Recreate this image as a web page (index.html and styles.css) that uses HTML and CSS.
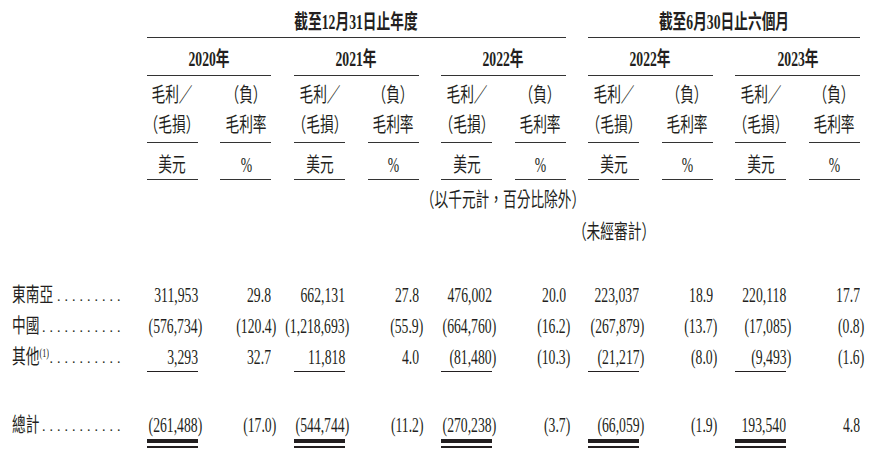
FILE: index.html
```html
<!DOCTYPE html>
<html lang="zh-Hant">
<head>
<meta charset="utf-8">
<title>毛利表</title>
<link rel="stylesheet" href="styles.css">
</head>
<body>
<div class="fin">
  <div class="b"></div>
  <div class="t span6"><span class="x">截至12月31日止年度</span></div>
  <div class="t span4"><span class="x">截至6月30日止六個月</span></div>

  <div class="b"></div>
  <div class="y"><span class="x">2020年</span></div>
  <div class="y"><span class="x">2021年</span></div>
  <div class="y"><span class="x">2022年</span></div>
  <div class="y"><span class="x">2022年</span></div>
  <div class="y"><span class="x">2023年</span></div>

  <div class="b"></div>
  <div class="s"><span class="x">毛利／</span><span class="x">（毛損）</span></div>
  <div class="s"><span class="x">（負）</span><span class="x">毛利率</span></div>
  <div class="s"><span class="x">毛利／</span><span class="x">（毛損）</span></div>
  <div class="s"><span class="x">（負）</span><span class="x">毛利率</span></div>
  <div class="s"><span class="x">毛利／</span><span class="x">（毛損）</span></div>
  <div class="s"><span class="x">（負）</span><span class="x">毛利率</span></div>
  <div class="s"><span class="x">毛利／</span><span class="x">（毛損）</span></div>
  <div class="s"><span class="x">（負）</span><span class="x">毛利率</span></div>
  <div class="s"><span class="x">毛利／</span><span class="x">（毛損）</span></div>
  <div class="s"><span class="x">（負）</span><span class="x">毛利率</span></div>

  <div class="b"></div>
  <div class="u"><span class="x">美元</span></div><div class="u"><span class="x">%</span></div>
  <div class="u"><span class="x">美元</span></div><div class="u"><span class="x">%</span></div>
  <div class="u"><span class="x">美元</span></div><div class="u"><span class="x">%</span></div>
  <div class="u"><span class="x">美元</span></div><div class="u"><span class="x">%</span></div>
  <div class="u"><span class="x">美元</span></div><div class="u"><span class="x">%</span></div>

  <div class="b"></div>
  <div class="note"><span class="x">（以千元計，百分比除外）</span></div>

  <div class="b"></div>
  <div class="note2"><span class="x">（未經審計）</span></div>

  <div class="sp1"></div>

  <div class="lab"><span class="lt"><span class="x xl">東南亞</span></span><span class="dots">.........</span></div>
  <div class="v"><span class="x xr">311,953</span></div>
  <div class="v"><span class="x xr">29.8</span></div>
  <div class="v"><span class="x xr">662,131</span></div>
  <div class="v"><span class="x xr">27.8</span></div>
  <div class="v"><span class="x xr">476,002</span></div>
  <div class="v"><span class="x xr">20.0</span></div>
  <div class="v"><span class="x xr">223,037</span></div>
  <div class="v"><span class="x xr">18.9</span></div>
  <div class="v"><span class="x xr">220,118</span></div>
  <div class="v"><span class="x xr">17.7</span></div>

  <div class="lab"><span class="lt"><span class="x xl">中國</span></span><span class="dots">...........</span></div>
  <div class="v"><span class="x xr">(576,734<span class="rp">)</span></span></div>
  <div class="v"><span class="x xr">(120.4<span class="rp">)</span></span></div>
  <div class="v"><span class="x xr">(1,218,693<span class="rp">)</span></span></div>
  <div class="v"><span class="x xr">(55.9<span class="rp">)</span></span></div>
  <div class="v"><span class="x xr">(664,760<span class="rp">)</span></span></div>
  <div class="v"><span class="x xr">(16.2<span class="rp">)</span></span></div>
  <div class="v"><span class="x xr">(267,879<span class="rp">)</span></span></div>
  <div class="v"><span class="x xr">(13.7<span class="rp">)</span></span></div>
  <div class="v"><span class="x xr">(17,085<span class="rp">)</span></span></div>
  <div class="v"><span class="x xr">(0.8<span class="rp">)</span></span></div>

  <div class="lab"><span class="lt"><span class="x xl">其他<sup class="fn">(1)</sup></span></span><span class="dots">..........</span></div>
  <div class="v ul"><span class="x xr">3,293</span></div>
  <div class="v"><span class="x xr">32.7</span></div>
  <div class="v ul"><span class="x xr">11,818</span></div>
  <div class="v"><span class="x xr">4.0</span></div>
  <div class="v ul"><span class="x xr">(81,480<span class="rp">)</span></span></div>
  <div class="v"><span class="x xr">(10.3<span class="rp">)</span></span></div>
  <div class="v ul"><span class="x xr">(21,217<span class="rp">)</span></span></div>
  <div class="v"><span class="x xr">(8.0<span class="rp">)</span></span></div>
  <div class="v ul"><span class="x xr">(9,493<span class="rp">)</span></span></div>
  <div class="v"><span class="x xr">(1.6<span class="rp">)</span></span></div>

  <div class="sp2"></div>

  <div class="lab tot"><span class="lt"><span class="x xl">總計</span></span><span class="dots">...........</span></div>
  <div class="v tot dbl"><span class="x xr">(261,488<span class="rp">)</span></span></div>
  <div class="v tot"><span class="x xr">(17.0<span class="rp">)</span></span></div>
  <div class="v tot dbl"><span class="x xr">(544,744<span class="rp">)</span></span></div>
  <div class="v tot"><span class="x xr">(11.2<span class="rp">)</span></span></div>
  <div class="v tot dbl"><span class="x xr">(270,238<span class="rp">)</span></span></div>
  <div class="v tot"><span class="x xr">(3.7<span class="rp">)</span></span></div>
  <div class="v tot dbl"><span class="x xr">(66,059<span class="rp">)</span></span></div>
  <div class="v tot"><span class="x xr">(1.9<span class="rp">)</span></span></div>
  <div class="v tot dbl"><span class="x xr">193,540</span></div>
  <div class="v tot"><span class="x xr">4.8</span></div>
</div>
</body>
</html>
```

FILE: styles.css
```css
html, body {
  margin: 0;
  padding: 0;
  background: #ffffff;
}

body {
  color: #231f20;
  font-family: "Liberation Serif", "Noto Sans CJK TC", serif;
  font-size: 20px;
}

.fin {
  display: grid;
  grid-template-columns: 112.4px repeat(10, 51px);
  column-gap: 22.56px;
  padding: 0 0 12px 12px;
}

/* horizontally condensed text, as in the printed source */
.x {
  display: inline-block;
  transform: scaleX(0.685);
  white-space: nowrap;
}

.xl { transform-origin: 0 50%; }
.xr { transform-origin: 100% 50%; }

.b {
  grid-column: 1;
}

.t {
  text-align: center;
  padding: 10px 0 3px;
  line-height: 24px;
  border-bottom: 1px solid #333333;
  font-weight: 700;
  white-space: nowrap;
}

.span6 { grid-column: span 6; }
.span4 { grid-column: span 4; }

.y {
  grid-column: span 2;
  text-align: center;
  padding: 9px 0 4px;
  line-height: 24px;
  border-bottom: 1px solid #333333;
  font-weight: 700;
  white-space: nowrap;
}

.s {
  display: flex;
  flex-direction: column;
  align-items: center;
  padding: 4px 0 2px;
  line-height: 30px;
  border-bottom: 1px solid #333333;
  white-space: nowrap;
}

.u {
  display: flex;
  justify-content: center;
  padding: 10px 0 2px;
  line-height: 24px;
  border-bottom: 1px solid #333333;
}

.note {
  grid-column: 2 / 12;
  text-align: center;
  padding-top: 8px;
  line-height: 24px;
  white-space: nowrap;
}

.note2 {
  grid-column: 7 / 10;
  text-align: center;
  padding-top: 8px;
  line-height: 24px;
  white-space: nowrap;
}

.sp1 {
  grid-column: 1 / -1;
  height: 35px;
}

.sp2 {
  grid-column: 1 / -1;
  height: 37px;
}

.lab {
  grid-column: 1;
  display: flex;
  align-items: flex-start;
  padding: 2px 0 1px;
  height: 28px;
  line-height: 28px;
  white-space: nowrap;
}

.lt {
  display: flex;
  width: 0;
  white-space: nowrap;
}

.lab .x,
.v .x {
  height: 28px;
}

.dots {
  margin-left: auto;
  height: 28px;
  font-size: 14px;
  line-height: 32px;
  letter-spacing: 4px;
  font-family: "Liberation Serif", serif;
}

.fn {
  font-size: 12px;
  vertical-align: 7px;
  line-height: 0;
  font-family: "Liberation Serif", serif;
}

.v {
  display: flex;
  justify-content: flex-end;
  padding: 2px 0 1px;
  height: 28px;
  line-height: 28px;
  white-space: nowrap;
}

.v.ul {
  padding-bottom: 0;
  border-bottom: 1px solid #231f20;
}

.v.tot, .lab.tot {
  padding-bottom: 0;
}

.v.dbl {
  border-bottom: 4px solid #231f20;
  box-shadow: 0 3px 0 #ffffff, 0 5px 0 #231f20;
}

.rp {
  margin-right: -0.333em;
}
```
